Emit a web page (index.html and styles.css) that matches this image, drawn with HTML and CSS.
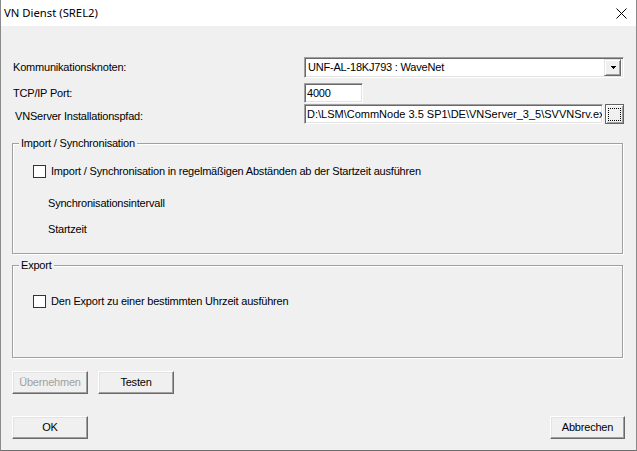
FILE: index.html
```html
<!DOCTYPE html>
<html lang="de">
<head>
<meta charset="utf-8">
<title>VN Dienst (SREL2)</title>
<link rel="stylesheet" href="styles.css">
</head>
<body>
<div class="window">
  <div class="titlebar">
    <span class="title">VN Dienst (SREL2)</span>
    <svg class="close" width="11" height="11" viewBox="0 0 11 11"><path d="M0.5 0.5 L10.5 10.5 M10.5 0.5 L0.5 10.5" stroke="#000" stroke-width="1" fill="none"/></svg>
  </div>
  <div class="content">
    <div class="row row-node">
      <div class="label">Kommunikationsknoten:</div>
      <div class="combo">
        <span class="combo-text">UNF-AL-18KJ793 : WaveNet</span>
        <span class="combo-btn"><svg width="5" height="3" viewBox="0 0 5 3" shape-rendering="crispEdges"><rect x="0" y="0" width="5" height="1" fill="#000"/><rect x="1" y="1" width="3" height="1" fill="#000"/><rect x="2" y="2" width="1" height="1" fill="#000"/></svg></span>
      </div>
    </div>
    <div class="row row-port">
      <div class="label">TCP/IP Port:</div>
      <div class="field field-port">4000</div>
    </div>
    <div class="row row-path">
      <div class="label label-path">VNServer Installationspfad:</div>
      <div class="field field-path">D:\LSM\CommNode 3.5 SP1\DE\VNServer_3_5\SVVNSrv.exe</div>
      <div class="browse"><span class="focus"></span></div>
    </div>

    <div class="group group-import">
      <span class="legend">Import / Synchronisation</span>
      <div class="check-row check-import">
        <span class="checkbox"></span>
        <span class="check-label">Import / Synchronisation in regelmäßigen Abständen ab der Startzeit ausführen</span>
      </div>
      <div class="plain plain-interval">Synchronisationsintervall</div>
      <div class="plain plain-start">Startzeit</div>
    </div>

    <div class="group group-export">
      <span class="legend">Export</span>
      <div class="check-row check-export">
        <span class="checkbox"></span>
        <span class="check-label">Den Export zu einer bestimmten Uhrzeit ausführen</span>
      </div>
    </div>

    <div class="buttons buttons-top">
      <div class="btn disabled">Übernehmen</div>
      <div class="btn">Testen</div>
    </div>
    <div class="buttons buttons-bottom">
      <div class="btn">OK</div>
      <div class="btn btn-cancel">Abbrechen</div>
    </div>
  </div>
</div>
</body>
</html>
```

FILE: styles.css
```css
* { box-sizing: border-box; }
html, body { margin: 0; padding: 0; }
body {
  width: 637px;
  height: 451px;
  overflow: hidden;
  background: #f0f0f0;
  font-family: "Liberation Sans", Arial, sans-serif;
  font-size: 11px;
  letter-spacing: -0.2px;
  color: #000;
}
.window {
  width: 637px;
  height: 451px;
  background: #f0f0f0;
  border-left: 1px solid #8a8a8a;
  border-right: 1px solid #8a8a8a;
  border-bottom: 1px solid #6e6e6e;
}
.titlebar {
  height: 26px;
  background: #fff;
  display: flex;
  align-items: center;
  padding-left: 3px;
}
.title {
  font-family: "Noto Sans", "Open Sans", sans-serif;
  font-size: 11.3px;
  letter-spacing: 0;
  line-height: 16px;
  margin-top: -1px;
  flex: 1;
}
.close {
  display: block;
  margin-right: 9px;
  margin-top: 1px;
}
.content {
  padding: 31px 0 0 11px;
}
.row {
  display: flex;
  align-items: center;
}
.label {
  width: 292px;
  padding-left: 1px;
  line-height: 13px;
  white-space: nowrap;
}
.label-path {
  padding-left: 3px;
  padding-top: 5px;
}
.row-node { height: 21px; }
.row-port { height: 20px; margin-top: 5px; }
.row-path { height: 20px; margin-top: 1px; }

.combo, .field {
  background: #fff;
  border: 1px solid;
  border-color: #a0a0a0 #fff #fff #a0a0a0;
  box-shadow: inset 1px 1px 0 #696969, inset -1px -1px 0 #e3e3e3;
  height: 100%;
  white-space: nowrap;
  overflow: hidden;
}
.combo {
  width: 320px;
  display: flex;
  align-items: center;
  padding: 2px;
}
.combo-text {
  flex: 1;
  padding-left: 1px;
  line-height: 13px;
}
.combo-btn {
  width: 17px;
  height: 17px;
  background: #f0f0f0;
  border: 1px solid;
  border-color: #e3e3e3 #696969 #696969 #e3e3e3;
  box-shadow: inset 1px 1px 0 #fff, inset -1px -1px 0 #a0a0a0;
  display: flex;
  align-items: center;
  justify-content: center;
  padding-left: 1px;
}
.combo-btn svg { display: block; }
.field {
  padding: 0 0 0 2px;
  line-height: 18px;
}
.field-port { width: 59px; }
.field-path { width: 299px; letter-spacing: 0; }
.browse {
  width: 19px;
  height: 20px;
  margin-left: 2px;
  background: #f0f0f0;
  border: 1px solid #646464;
  box-shadow: inset 1px 1px 0 #fff, inset -1px -1px 0 #a0a0a0;
  display: flex;
  align-items: center;
  justify-content: center;
}
.focus {
  width: 13px;
  height: 13px;
  border: 1px dotted #000;
}

.group {
  position: relative;
  width: 611px;
  border: 1px solid #a0a0a0;
  box-shadow: inset 1px 1px 0 #fff, 1px 1px 0 #fff;
  padding-left: 20px;
}
.group-import { height: 111px; margin-top: 19px; }
.group-export { height: 93px; margin-top: 11px; }
.legend {
  position: absolute;
  left: 6px;
  top: -7px;
  padding: 0 2px;
  line-height: 13px;
  background: #f0f0f0;
  white-space: nowrap;
}
.check-row {
  display: flex;
  align-items: center;
  height: 13px;
}
.check-import { margin-top: 21px; }
.check-export { margin-top: 29px; }
.checkbox {
  width: 13px;
  height: 13px;
  background: #fff;
  border: 1px solid #333;
  flex: none;
}
.check-label {
  margin-left: 5px;
  line-height: 13px;
  white-space: nowrap;
}
.plain {
  line-height: 13px;
  padding-left: 15px;
}
.plain-interval { margin-top: 19px; }
.plain-start { margin-top: 13px; }

.buttons {
  display: flex;
  gap: 10px;
}
.buttons-top { margin-top: 13px; }
.buttons-bottom {
  margin-top: 22px;
  width: 613px;
  justify-content: space-between;
}
.btn {
  width: 76px;
  height: 23px;
  background: #f0f0f0;
  border: 1px solid;
  border-color: #fff #696969 #696969 #fff;
  box-shadow: inset -1px -1px 0 #a0a0a0, inset 1px 1px 0 #e3e3e3;
  display: flex;
  align-items: center;
  justify-content: center;
  line-height: 13px;
}
.btn.disabled { color: #a0a0a0; }
.btn-cancel { width: 75px; }
```
